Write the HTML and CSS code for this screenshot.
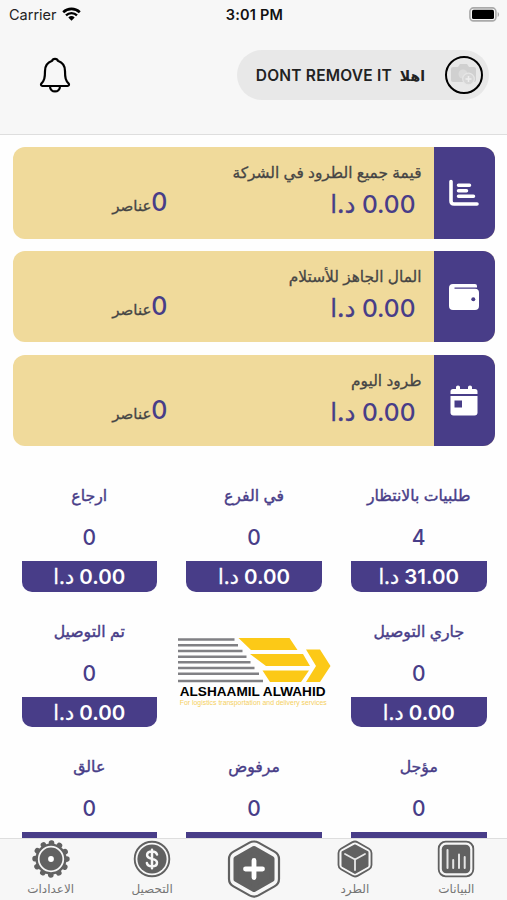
FILE: index.html
```html
<!DOCTYPE html>
<html lang="ar" dir="rtl">
<head>
    <meta charset="UTF-8">
    <meta name="viewport" content="width=device-width, initial-scale=1.0">
    <title>ALSHAAMIL ALWAHID</title>
    <link rel="stylesheet" href="styles.css">
</head>
<body>
<div class="app">

    <header class="header">
        <div class="status-bar" dir="ltr">
            <div class="carrier">
                <span>Carrier</span>
                <svg width="19" height="14" viewBox="0 0 19 14">
                    <path d="M1.2 5.2a12 12 0 0 1 16.6 0" fill="none" stroke="#000" stroke-width="2.6"/>
                    <path d="M4 8.3a8 8 0 0 1 11 0" fill="none" stroke="#000" stroke-width="2.4"/>
                    <path d="M9.5 13.8 6.3 10.5a4.8 4.8 0 0 1 6.4 0z"/>
                </svg>
            </div>
            <div class="time">3:01 PM</div>
            <div class="battery">
                <svg width="31" height="15" viewBox="0 0 31 15">
                    <rect x=".9" y=".9" width="26" height="13" rx="3.6" fill="#f7f7f7" stroke="#aaa" stroke-width="1.6"/>
                    <rect x="3" y="2.8" width="22" height="9.2" rx="1.6"/>
                    <path d="M28.7 5v5c1.8-.8 1.8-4.2 0-5z" fill="#aaa"/>
                </svg>
            </div>
        </div>
        <div class="top-row">
            <div class="user">
                <div class="avatar">
                    <svg width="28" height="24" viewBox="0 0 28 24">
                        <path d="M3 4h5l2-3h7l2 3h5q2 0 2 2v11q0 2-2 2H3q-2 0-2-2V6q0-2 2-2z" fill="#d0d0d0"/>
                        <circle cx="13" cy="11" r="4.5" fill="#dcdcdc"/>
                        <circle cx="18.5" cy="16" r="5.8" fill="#d6d6d6" stroke="#e6e6e6" stroke-width="1.2"/>
                        <path d="M18.5 13v6m-3-3h6" stroke="#eee" stroke-width="1.5"/>
                    </svg>
                </div>
                <span class="hello">اهلا</span>
                <span class="user-name">DONT REMOVE IT</span>
            </div>
            <svg class="bell" width="32" height="36" viewBox="0 0 32 36" fill="none" stroke="#000" stroke-width="2.2" stroke-linejoin="round">
                <path d="M13.2 3.7c.5-2.4 5.1-2.4 5.600 0 4.5 1.5 7.2 5.2 7.2 10.3 0 7 .7 9.5 3.6 12.6.9 1 .3 2.4-1 2.4H3.4c-1.3 0-1.900-1.4-1-2.4C5.3 23.5 6 21 6 14c0-5.1 2.7-8.8 7.2-10.3z"/>
                <path d="M11 29.2c0 7 10 7 10 0"/>
            </svg>
        </div>
    </header>

    <main class="content">
        <section class="cards">
            <div class="card">
                <div class="card-icon">
                    <svg width="30" height="28" viewBox="0 0 30 28" fill="none" stroke="#fff" stroke-linecap="round" stroke-linejoin="round">
                        <path d="M2 2.5V22q0 3 3 3h23" stroke-width="3.6"/>
                        <path d="M9.5 6.3h11M9.5 11.8h8M9.5 17.3h15" stroke-width="3.5"/>
                    </svg>
                </div>
                <div class="card-body">
                    <div class="card-title">قيمة جميع الطرود في الشركة</div>
                    <div class="card-row">
                        <div class="amount">0.00 <span>د.ا</span></div>
                        <div class="items"><b>0</b><span>عناصر</span></div>
                    </div>
                </div>
            </div>
            <div class="card">
                <div class="card-icon">
                    <svg width="30" height="28" viewBox="0 0 30 28">
                        <path d="M4 1h22q2 0 2 2v1.5H5.5v1.2H26q4 0 4 4V23q0 4-4 4H4q-4 0-4-4V5q0-4 4-4z" fill="#fff"/>
                        <circle cx="24.3" cy="16.2" r="2" fill="#483d88"/>
                    </svg>
                </div>
                <div class="card-body">
                    <div class="card-title">المال الجاهز للأستلام</div>
                    <div class="card-row">
                        <div class="amount">0.00 <span>د.ا</span></div>
                        <div class="items"><b>0</b><span>عناصر</span></div>
                    </div>
                </div>
            </div>
            <div class="card">
                <div class="card-icon">
                    <svg width="28" height="31" viewBox="0 0 28 31" fill="#fff">
                        <path d="M3 4h3V2q0-1.5 2-1.5T10 2v2h8V2q0-1.5 2-1.5T22 2v2h3q2.5 0 2.5 2.5V9H.5V6.500Q.5 4 3 4z"/>
                        <path d="M.5 11h27v16.500q0 3-3 3h-21q-3 0-3-3z"/>
                        <rect x="4.5" y="15.5" width="7.5" height="7" fill="#483d88"/>
                    </svg>
                </div>
                <div class="card-body">
                    <div class="card-title">طرود اليوم</div>
                    <div class="card-row">
                        <div class="amount">0.00 <span>د.ا</span></div>
                        <div class="items"><b>0</b><span>عناصر</span></div>
                    </div>
                </div>
            </div>
        </section>

        <section class="grid">
            <div class="tile">
                <div class="tile-title">طلبيات بالانتظار</div>
                <div class="tile-count">4</div>
                <div class="tile-amount">31.00 <span>د.ا</span></div>
            </div>
            <div class="tile">
                <div class="tile-title">في الفرع</div>
                <div class="tile-count">0</div>
                <div class="tile-amount">0.00 <span>د.ا</span></div>
            </div>
            <div class="tile">
                <div class="tile-title">ارجاع</div>
                <div class="tile-count">0</div>
                <div class="tile-amount">0.00 <span>د.ا</span></div>
            </div>
            <div class="tile">
                <div class="tile-title">جاري التوصيل</div>
                <div class="tile-count">0</div>
                <div class="tile-amount">0.00 <span>د.ا</span></div>
            </div>
            <div class="logo" dir="ltr">
                <svg width="154" height="46" viewBox="0 0 154 46">
                    <path d="M0 1.5h56.500M0 7.200h60M0 13h64.500M0 18.700h68.500M0 24.300h72.500M0 30h76.500M0 35.700h81M0 43h85" stroke="#808084" stroke-width="2.5"/>
                    <path d="M60.500 0h51l8 12H73zM72 16h53l7 12H88zM84.500 32.500H131L123 44H92zM128 11.500h14L152.500 28 142 44h-14l10-16z" fill="#fcc917"/>
                </svg>
                <div class="logo-name">ALSHAAMIL ALWAHID</div>
                <div class="logo-sub">For logistics transportation and delivery services</div>
            </div>
            <div class="tile">
                <div class="tile-title">تم التوصيل</div>
                <div class="tile-count">0</div>
                <div class="tile-amount">0.00 <span>د.ا</span></div>
            </div>
            <div class="tile">
                <div class="tile-title">مؤجل</div>
                <div class="tile-count">0</div>
                <div class="tile-amount"></div>
            </div>
            <div class="tile">
                <div class="tile-title">مرفوض</div>
                <div class="tile-count">0</div>
                <div class="tile-amount"></div>
            </div>
            <div class="tile">
                <div class="tile-title">عالق</div>
                <div class="tile-count">0</div>
                <div class="tile-amount"></div>
            </div>
        </section>
    </main>

    <nav class="tab-bar">
        <div class="tab">
            <svg width="38" height="38" viewBox="0 0 38 38">
                <rect x="1.7" y="1.7" width="34.6" height="34.6" rx="7" fill="#f7f7f7" stroke="#616161" stroke-width="1.8"/>
                <rect x="4.8" y="4.8" width="28.4" height="28.4" rx="4.5" fill="#616161"/>
                <path d="M10.500 10v18M16.200 20v8M22 14.500V28M27.700 17v11" stroke="#e4e4e4" stroke-width="2" stroke-linecap="round"/>
            </svg>
            <span>البيانات</span>
        </div>
        <div class="tab">
            <svg width="38" height="38" viewBox="0 0 38 38" stroke-linejoin="round">
                <path d="M19 1.500Q20.500 1.500 22 2.400L33 8.800Q35.500 10.300 35.500 13v12q0 2.700-2.500 4.200L22 35.600q-3 1.800-6 0L5 29.200Q2.500 27.700 2.500 25V13q0-2.700 2.500-4.200L16 2.400Q17.500 1.500 19 1.500z" fill="#f7f7f7" stroke="#616161" stroke-width="1.8"/>
                <path d="M19 5.500 31.500 12.200v13.600L19 33 6.500 25.800V12.200z" fill="#616161" stroke="#616161" stroke-width="2"/>
                <path d="M9 14l10 5.500L29 14M19 19.500V30" fill="none" stroke="#e8e8e8" stroke-width="1.8" stroke-linecap="round"/>
            </svg>
            <span>الطرد</span>
        </div>
        <div class="tab tab-add">
            <svg width="54" height="58" viewBox="0 0 54 58" stroke-linejoin="round">
                <path d="M27 1.500q2.500 0 4.500 1.100l16 9Q52 14.100 52 19v20q0 4.900-4.500 7.400l-16 9q-4.500 2.400-9 0l-16-9Q2 43.900 2 39V19q0-4.900 4.500-7.400l16-9Q24.500 1.500 27 1.500z" fill="#f7f7f7" stroke="#616161" stroke-width="2.2"/>
                <path d="M27 8.500 45 18.600v20.800L27 49.500 9 39.400V18.600z" fill="#616161" stroke="#616161" stroke-width="5"/>
                <path d="M27 20.500v17M18.500 29h17" stroke="#fff" stroke-width="4.8" stroke-linecap="round"/>
            </svg>
        </div>
        <div class="tab">
            <svg width="38" height="38" viewBox="0 0 38 38">
                <circle cx="19" cy="19" r="17.3" fill="#f7f7f7" stroke="#616161" stroke-width="1.9"/>
                <circle cx="19" cy="19" r="14.6" fill="#616161"/>
                <path d="M24 14.500c-.5-2-2.300-3-5-3-3 0-4.900 1.300-4.900 3.500 0 5.400 9.900 2.400 9.900 7.700 0 2.300-2 3.600-5 3.600-2.900 0-4.700-1.200-5.100-3.300M19 9.700v18.600" fill="none" stroke="#f7f7f7" stroke-width="2.5" stroke-linecap="round"/>
            </svg>
            <span>التحصيل</span>
        </div>
        <div class="tab">
            <svg width="38" height="38" viewBox="0 0 38 38">
                <circle cx="19" cy="19" r="15.6" fill="#616161"/>
                <circle cx="19" cy="19" r="15.9" fill="none" stroke="#616161" stroke-width="5.6" stroke-linecap="round" stroke-dasharray=".1 8.225"/>
                <circle cx="19" cy="19" r="12.3" fill="#616161" stroke="#f7f7f7" stroke-width="1.7"/>
                <circle cx="19" cy="19" r="2.9" fill="#fff"/>
            </svg>
            <span>الاعدادات</span>
        </div>
    </nav>

</div>
</body>
</html>
```

FILE: styles.css
```css
/* General Styles */
* {
    box-sizing: border-box;
}

body {
    margin: 0;
    background-color: #fefefe;
    font-family: Inter, "DejaVu Sans", sans-serif;
    color: #222;
}

svg {
    display: block;
}

.app {
    height: 900px;
    display: flex;
    flex-direction: column;
    overflow: hidden;
}

/* Header */
.header {
    height: 135px;
    flex-shrink: 0;
    background-color: #f7f7f7;
    border-bottom: 1px solid #dedede;
}

.status-bar {
    height: 28px;
    padding: 0 7px 0 9px;
    display: grid;
    grid-template-columns: 1fr auto 1fr;
    align-items: center;
    font-size: 14.5px;
}

.carrier {
    display: flex;
    align-items: center;
    gap: 5px;
}

.time {
    font-size: 14.5px;
    font-weight: 600;
    letter-spacing: 0.2px;
    color: #111;
}

.battery {
    display: flex;
    justify-content: flex-end;
}

.top-row {
    height: 50px;
    margin-top: 22px;
    padding: 0 18px 0 38.5px;
    display: flex;
    align-items: center;
    justify-content: space-between;
}

.user {
    width: 252px;
    height: 50px;
    padding-right: 6px;
    border-radius: 25px;
    background-color: #e8e8e8;
    display: flex;
    align-items: center;
    font-weight: 600;
}

.avatar {
    width: 38px;
    height: 38px;
    border: 2.5px solid #000;
    border-radius: 50%;
    display: flex;
    align-items: center;
    justify-content: center;
}

.hello {
    margin-right: 20px;
    font-size: 14px;
}

.user-name {
    margin-right: 8px;
    font-size: 15.5px;
    letter-spacing: 0.2px;
    white-space: nowrap;
}

/* Value cards */
.content {
    flex: 1;
    min-height: 0;
    overflow: hidden;
}

.cards {
    padding: 12px 12px 0 13px;
    display: flex;
    flex-direction: column;
    gap: 12.3px;
}

.card {
    height: 91.5px;
    display: flex;
    border-radius: 12px;
    overflow: hidden;
    background-color: #f0da9b;
}

.card-icon {
    width: 61.5px;
    background-color: #483d88;
    display: flex;
    align-items: center;
    justify-content: center;
}

.card-body {
    flex: 1;
    padding: 11px 12px 0 0;
}

.card-title {
    height: 28px;
    line-height: 29px;
    font-size: 15.4px;
    color: #454545;
    white-space: nowrap;
    -webkit-text-stroke: 0.3px #454545;
}

.card-row {
    height: 36px;
    display: flex;
    align-items: center;
}

.amount {
    width: 254px;
    padding-right: 6px;
    font-size: 24.5px;
    font-weight: 500;
    line-height: 36px;
    letter-spacing: -1px;
    color: #483d88;
}

.amount span {
    letter-spacing: 0;
    -webkit-text-stroke: 0.3px #483d88;
}

.items {
    display: flex;
    align-items: baseline;
    line-height: 40px;
    font-size: 15px;
    color: #454545;
    -webkit-text-stroke: 0.3px #454545;
}

.items b {
    font-size: 25px;
    font-weight: 500;
    color: #483d88;
    -webkit-text-stroke: 0;
}

/* Status grid */
.grid {
    padding: 35px 20.5px 0 21.5px;
    display: grid;
    grid-template-columns: repeat(3, 135.5px);
    grid-auto-rows: 110.5px;
    justify-content: space-between;
    row-gap: 25px;
}

.tile {
    text-align: center;
    color: #483d88;
}

.tile-title {
    height: 28px;
    line-height: 29px;
    font-size: 15.7px;
    white-space: nowrap;
    -webkit-text-stroke: 0.4px #483d88;
}

.tile-count {
    height: 52px;
    padding-top: 14px;
    line-height: 30px;
    font-size: 21px;
    font-weight: 500;
}

.tile-amount {
    height: 30.5px;
    line-height: 31px;
    border-radius: 0 0 10px 10px;
    background-color: #483d88;
    color: #fff;
    font-size: 20.5px;
    font-weight: 600;
    letter-spacing: -0.7px;
}

.tile-amount span {
    font-weight: 400;
    letter-spacing: 0;
    -webkit-text-stroke: 0.3px #fff;
}

.logo {
    width: 154px;
    margin: 21px -10px 0 0;
}

.logo-name {
    padding-left: 2px;
    font-family: "Liberation Sans", Arial, sans-serif;
    font-size: 13.6px;
    font-weight: bold;
    line-height: 15px;
    color: #000;
    white-space: nowrap;
}

.logo-sub {
    padding-left: 2px;
    font-family: "Liberation Sans", Arial, sans-serif;
    font-size: 6.9px;
    line-height: 7px;
    color: #f5d060;
    white-space: nowrap;
}

/* Bottom tabs */
.tab-bar {
    height: 62px;
    flex-shrink: 0;
    border-top: 1px solid #dedede;
    background-color: #f7f7f7;
    display: grid;
    grid-template-columns: repeat(5, 1fr);
}

.tab {
    padding-top: 1px;
    display: flex;
    flex-direction: column;
    align-items: center;
    color: #757575;
}

.tab span {
    margin-top: 1px;
    line-height: 20px;
    font-size: 12px;
    white-space: nowrap;
}
```
